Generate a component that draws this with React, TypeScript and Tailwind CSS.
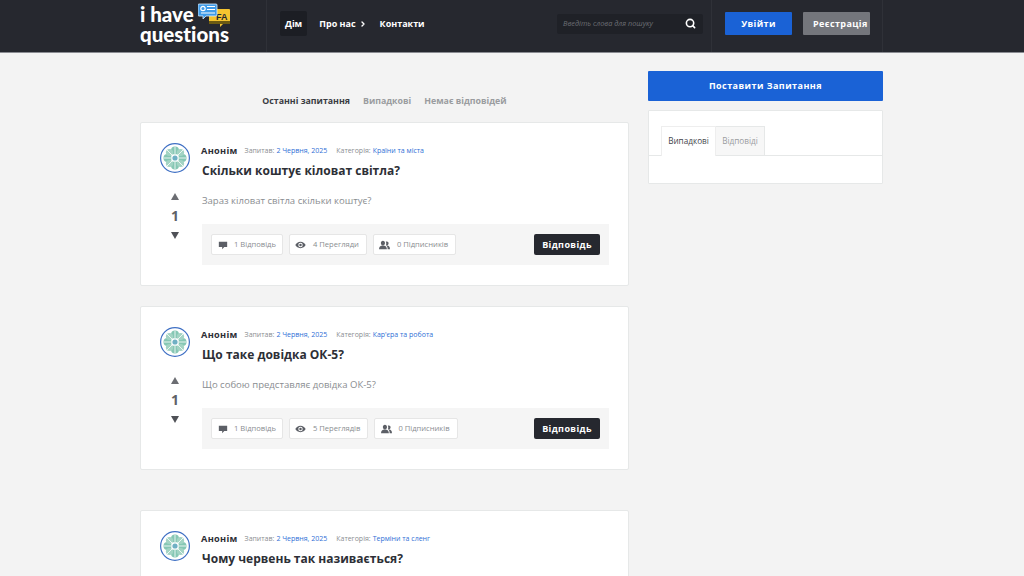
import { ChevronRight, Search } from 'lucide-react'

const questions = [
  { title: 'Скільки коштує кіловат світла?', category: 'Країни та міста', body: 'Зараз кіловат світла скільки коштує?', views: '4 Перегляди' },
  { title: 'Що таке довідка ОК-5?', category: "Кар'єра та робота", body: 'Що собою представляє довідка ОК-5?', views: '5 Переглядів' },
  { title: 'Чому червень так називається?', category: 'Терміни та сленг', body: '', views: '' },
]

function Logo() {
  return (
    <div className="relative h-[46px] w-[96px]">
      <div className="pt-[4px] font-['Lato',sans-serif] text-[20.500px] font-black leading-[20px] text-white [font-variant-ligatures:none]">
        i have
        <br />
        questions
      </div>
      <svg viewBox="0 0 32 24" className="absolute left-[58px] top-[3px] h-[24px] w-[32px]">
        <path d="M11 6h20a1 1 0 0 1 1 1v13a1 1 0 0 1-1 1h-6l-3 3v-3H11z" fill="#f4c430" />
        <rect x="11" y="18" width="21" height="3" fill="#6b5a12" />
        <text x="18" y="16.500" fontSize="9" fontWeight="700" fill="#26282f" fontFamily="Liberation Sans, sans-serif">FA</text>
        <path d="M1 1h17a1 1 0 0 1 1 1v10a1 1 0 0 1-1 1H8l-3 3v-3H1a1 1 0 0 1-1-1V2a1 1 0 0 1 1-1z" fill="#3f9be8" stroke="#dbeeff" strokeWidth="0.8" />
        <circle cx="5" cy="5.500" r="2.200" fill="none" stroke="#fff" strokeWidth="1.200" />
        <path d="M9 3.500h8M9 6.500h8M3 10h14" stroke="#fff" strokeWidth="1.200" />
      </svg>
    </div>
  )
}

function Avatar() {
  return (
    <svg viewBox="0 0 30 30" className="size-[30px] shrink-0">
      <circle cx="15" cy="15" r="14.400" fill="#fff" stroke="#3f70c4" strokeWidth="1.200" />
      <g fill="#86c7b4">
        <circle cx="15" cy="7.500" r="4" />
        <circle cx="15" cy="22.500" r="4" />
        <circle cx="7.500" cy="15" r="4" />
        <circle cx="22.500" cy="15" r="4" />
        <circle cx="9.500" cy="9.500" r="3.600" fill="#a3d4c4" />
        <circle cx="20.500" cy="9.500" r="3.600" fill="#a3d4c4" />
        <circle cx="9.500" cy="20.500" r="3.600" fill="#a3d4c4" />
        <circle cx="20.500" cy="20.500" r="3.600" fill="#a3d4c4" />
      </g>
      <path d="M15 4v22M4 15h22M7 7l16 16M23 7L7 23" stroke="#fff" strokeWidth="0.800" />
      <circle cx="15" cy="15" r="2.600" fill="#6fb0c4" />
    </svg>
  )
}

function Chip({ icon, label, wide = false }: { icon: React.ReactNode; label: string; wide?: boolean }) {
  return (
    <div className={`flex h-[21px] items-center rounded-[2px] border border-[#e6e6e6] bg-white pl-[5px] text-[7.600px] text-[#8a8d91] ${wide ? 'pr-[7px]' : 'pr-[6px]'}`}>
      <span className="flex w-[12px] justify-center text-[#5c5f66]">{icon}</span>
      <span className={wide ? 'ml-[6px]' : 'ml-[5px]'}>{label}</span>
    </div>
  )
}

const commentIcon = (
  <svg viewBox="0 0 12 12" className="size-[10px]" fill="currentColor">
    <path d="M1 2h10v6.500H7.500L5 11V8.500H1z" />
  </svg>
)
const eyeIcon = (
  <svg viewBox="0 0 14 10" className="h-[8px] w-[11px]" fill="currentColor">
    <path fillRule="evenodd" d="M7 1c3 0 5.400 2 6.600 4C12.400 7 10 9 7 9S1.600 7 .4 5C1.600 3 4 1 7 1zm0 1.200a2.800 2.800 0 1 0 0 5.600 2.800 2.800 0 0 0 0-5.600z" />
    <circle cx="7" cy="5" r="1.600" />
  </svg>
)
const usersIcon = (
  <svg viewBox="0 0 14 12" className="h-[10px] w-[11px]" fill="currentColor">
    <path d="M5 .5c1.600 0 2.600 1.200 2.600 2.800S6.600 6.500 5 6.500 2.400 4.900 2.400 3.300 3.400.5 5 .5z" />
    <path d="M0 11.500c0-3 1.500-4.800 5-4.800s5 1.800 5 4.800z" />
    <path d="M10 1.500c1.300 0 2.200 1 2.200 2.300S11.300 6.500 10 6.500c-.4 0-.8-.1-1.100-.3.300-.8.400-1.800.3-2.700-.1-.8-.3-1.300-.6-1.600.4-.2.900-.4 1.400-.4z" />
    <path d="M10.500 6.700c2 .2 3.500 1.500 3.500 4.800h-3c0-2-.2-3.500-1.500-4.600z" />
  </svg>
)

function QuestionCard({ q, index }: { q: (typeof questions)[number]; index: number }) {
  return (
    <article className={`flex rounded-[2px] border border-[#e6e8e8] bg-white pl-[19px] pr-[19px] pt-[20px] ${index === 2 ? 'mt-[40px] h-[120px]' : 'mt-[20px] h-[164px]'} ${index === 0 ? '!mt-0' : ''}`}>
      <div className="flex w-[30px] shrink-0 flex-col items-center">
        <Avatar />
        {q.body && (
          <div className="mt-[20px] flex flex-col items-center text-[#5f6166]">
            <span className="h-0 w-0 border-x-[4px] border-b-[7px] border-x-transparent border-b-[#6b6d72]" />
            <span className="mt-[6px] text-[14px] font-bold leading-[20px]">1</span>
            <span className="mt-[6px] h-0 w-0 border-x-[4px] border-t-[7px] border-x-transparent border-t-[#4f5157]" />
          </div>
        )}
      </div>
      <div className="ml-[12px] min-w-0 flex-1">
        <div className="flex h-[16px] items-center text-[7px] text-[#8a8d91]">
          <span className="-ml-px text-[9.200px] font-bold tracking-[0.3px] text-[#2d2f36]">Анонім</span>
          <span className="ml-[7px]">Запитав:</span>
          <span className="ml-[2px] text-[#2f6fd6]">2 Червня, 2025</span>
          <span className="ml-[9px]">Категорія:</span>
          <span className="ml-[2px] text-[#2f6fd6]">{q.category}</span>
        </div>
        <h2 className="mt-[2px] text-[12px] font-bold leading-[20px] text-[#2d2f36]">{q.title}</h2>
        {q.body && (
          <>
            <p className="mt-[12px] text-[9.550px] leading-[16px] text-[#8a8d91]">{q.body}</p>
            <div className="mt-[15px] flex h-[41px] items-center justify-between bg-[#f5f5f5] pl-[9px] pr-[9px]">
              <div className="flex gap-[6px]">
                <Chip icon={commentIcon} label="1 Відповідь" />
                <Chip icon={eyeIcon} label={q.views} wide />
                <Chip icon={usersIcon} label="0 Підписників" wide />
              </div>
              <button className="h-[21px] w-[66px] rounded-[2px] bg-[#26282f] text-[9px] font-bold tracking-[0.4px] text-white">Відповідь</button>
            </div>
          </>
        )}
      </div>
    </article>
  )
}

export default function App() {
  return (
    <div className="h-[576px] overflow-hidden bg-[#f3f3f3] font-['Open_Sans',sans-serif]">
      <header className="h-[53px] border-b border-[#8a8c92] bg-[#26282f]">
        <div className="mx-auto flex h-full w-[744px] items-center pr-px">
          <div className="flex h-full w-[127px] items-start border-r border-[#2f3138]">
            <Logo />
          </div>
          <nav className="mb-[5px] ml-[13px] flex flex-1 items-center text-[9px] font-bold text-white">
            <a className="rounded-[2px] bg-[#1c1e24] px-[5px] py-[6px]">Дім</a>
            <a className="ml-[12px] flex items-center">Про нас<ChevronRight className="ml-[3px] size-[8px]" strokeWidth={4} /></a>
            <a className="ml-[13px]">Контакти</a>
          </nav>
          <div className="mb-[5px] flex h-[20px] w-[146px] items-center justify-between rounded-[2px] bg-[#1f2127] pl-[6px] pr-[7px]">
            <span className="text-[7.300px] italic text-[#6c6e74]">Введіть слова для пошуку</span>
            <Search className="size-[11px] text-white" strokeWidth={3.500} />
          </div>
          <div className="ml-[8px] flex h-full items-center border-x border-[#2f3138] pb-[5px] pl-[13px] pr-[12px]">
            <button className="h-[23px] w-[67px] rounded-[1px] bg-[#1a62d6] text-[9px] font-bold tracking-[0.4px] text-white">Увійти</button>
            <button className="ml-[11px] h-[23px] w-[67px] whitespace-nowrap rounded-[1px] bg-[#74767c] pl-[10px] text-left text-[9px] font-bold tracking-[0.4px] text-white">Реєстрація</button>
          </div>
        </div>
      </header>
      <div className="mx-auto flex w-[744px] justify-between pr-px pt-[18px]">
        <main className="w-[489px]">
          <div className="flex h-[51px] items-center justify-center gap-[13px] pt-[11px] text-[8.800px] font-bold text-[#9a9c9f]">
            <span className="text-[#3a3c42]">Останні запитання</span>
            <span>Випадкові</span>
            <span>Немає відповідей</span>
          </div>
          {questions.map((q, i) => (
            <QuestionCard key={q.title} q={q} index={i} />
          ))}
        </main>
        <aside className="w-[235px]">
          <button className="h-[30px] w-full rounded-[1px] bg-[#1a62d6] text-[9px] font-bold tracking-[0.45px] text-white">Поставити Запитання</button>
          <div className="mt-[9px] h-[74px] rounded-[1px] border border-[#e6e8e8] bg-white pt-[15px]">
            <div className="flex h-[30px] border-b border-[#e6e8e8] pl-[12px] text-[8.200px]">
              <span className="-mb-px flex w-[55px] items-center justify-center border-x border-t border-[#eeeeee] bg-white text-[#44464c]">Випадкові</span>
              <span className="flex w-[49px] items-center justify-center border-r border-t border-[#e6e8e8] bg-[#f7f7f7] text-[#9a9c9f]">Відповіді</span>
            </div>
          </div>
        </aside>
      </div>
    </div>
  )
}
